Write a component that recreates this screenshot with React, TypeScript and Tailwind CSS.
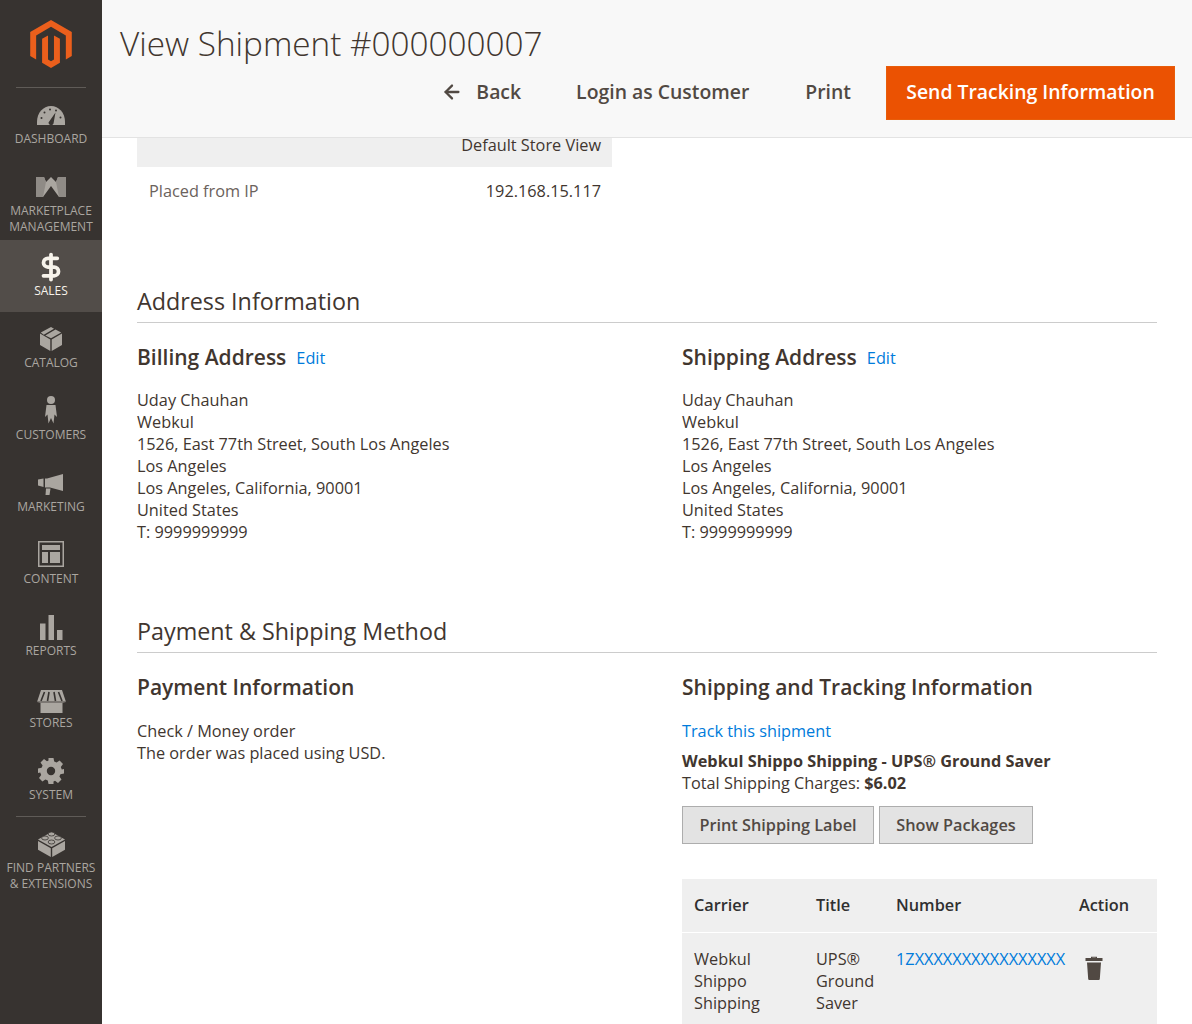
import type { ReactNode } from "react";
import { ArrowLeft, DollarSign } from "lucide-react";

const iconFill = "#aaa6a0";

function DashboardIcon() {
  return (
    <svg width="28" height="19" viewBox="0 0 28 19">
      <path d="M0 19V15.500C0 7 6.200 0 14 0s14 7 14 15.500V19Z" fill={iconFill} />
      <path d="M11.500 16.500 18.500 6.500 16.500 17.500A2.600 2.600 0 0 1 11.500 16.500Z" fill="#373330" />
      <g fill="#373330">
        <circle cx="4.500" cy="12" r="1" />
        <circle cx="7.500" cy="6.500" r="1" />
        <circle cx="13" cy="3.500" r="1" />
        <circle cx="19" cy="4.500" r="1" />
        <circle cx="23.500" cy="11.500" r="1" />
      </g>
    </svg>
  );
}

function MarketplaceIcon() {
  return (
    <svg width="30" height="20" viewBox="0 0 30 20">
      <path d="M0 0H8L10 5 15 0 20 5 22 0H30V20H23L15 9 7 20H0Z" fill={iconFill} />
      <path d="M8 0 10 5 7 20H0V0ZM22 0 20 5 23 20H30V0Z" fill="#8f8b86" />
    </svg>
  );
}

function CatalogIcon() {
  return (
    <svg width="22" height="24" viewBox="0 0 22 24">
      <path d="M0 6.500 10.300 12.500V24L0 18ZM22 6.500V18L11.700 24V12.500Z" fill={iconFill} />
      <path d="M11 0 14 1.700 3.800 7.700 .8 5.500ZM15.500 2.600 21.200 5.500 11 11.300 5.300 8.500Z" fill={iconFill} />
    </svg>
  );
}

function CustomerIcon() {
  return (
    <svg width="14" height="28" viewBox="0 0 14 28" className="-mt-[2px]">
      <circle cx="7" cy="4" r="4" fill={iconFill} />
      <path d="M2.500 9H11.500L13 21 10.500 18.500 9.500 27.500 7 22 4.500 27.500 3.500 18.500 1 21Z" fill={iconFill} />
    </svg>
  );
}

function MarketingIcon() {
  return (
    <svg width="26" height="24" viewBox="0 0 26 24" className="mt-[6px]">
      <path d="M25 0V17L12 13.500H7V4.500H9Z" fill={iconFill} />
      <path d="M0 5.500 5.500 4.500V13L0 11.500ZM8 14.500H12.500L11.500 21 7.500 21Z" fill={iconFill} />
    </svg>
  );
}

function ContentIcon() {
  return (
    <svg width="26" height="26" viewBox="0 0 26 26" className="-mt-[2px]">
      <path fillRule="evenodd" d="M0 0H26V26H0ZM1.500 1.500V24.500H24.500V1.500Z" fill={iconFill} />
      <path d="M4 4H22V9H4ZM4 11H10V22H4ZM12 11H22V22H12Z" fill={iconFill} />
    </svg>
  );
}

function ReportsIcon() {
  return (
    <svg width="23" height="25" viewBox="0 0 23 25">
      <path d="M0 8.500H5.500V25H0ZM8.500 0H14V25H8.500ZM17 15H22.500V25H17Z" fill={iconFill} />
    </svg>
  );
}

function StoresIcon() {
  return (
    <svg width="29" height="23" viewBox="0 0 29 23" className="mt-[5px]">
      <path d="M4 0H25L29 12 25.500 13V23H3.500V13L0 12Z" fill={iconFill} />
      <path d="M7.500 2 4 11M12 2 10.500 11M17 2 18.500 11M21.500 2 25 11" stroke="#373330" strokeWidth="1.600" fill="none" />
      <path d="M0 12H29" stroke="#373330" strokeWidth="0.800" />
    </svg>
  );
}

function SystemIcon() {
  return (
    <svg width="26" height="26" viewBox="0 0 26 26">
      <path
        fillRule="evenodd"
        fill={iconFill}
        d="M10.500 0H15.500L16.200 3.600 18.600 4.600 21.600 2.500 25 6 22.800 9 23.800 11.400 26 11V15.500L22.400 16.200 21.400 18.600 23.500 21.600 20 25 17 22.800 15.500 23.400 15.500 26H10.500L9.800 22.400 7.400 21.400 4.400 23.500 1 20 3.200 17 2.200 14.600 0 15V10.500L3.600 9.800 4.600 7.400 2.500 4.400 6 1 9 3.200 10.500 2.600ZM13 8.800A4.200 4.200 0 1 0 13 17.200 4.200 4.200 0 0 0 13 8.800Z"
      />
    </svg>
  );
}

function PartnersIcon() {
  return (
    <svg width="27" height="26" viewBox="0 0 27 26">
      <path d="M13.500 1 27 8.500 13.500 16 0 8.500Z" fill={iconFill} />
      <path d="M0 10 12.800 17.200V26L0 18.800ZM27 10V18.800L14.200 26V17.200Z" fill={iconFill} />
      <g fill={iconFill} stroke="#373330" strokeWidth="0.800">
        <ellipse cx="13.500" cy="3" rx="3.400" ry="2" />
        <ellipse cx="7" cy="7" rx="3.400" ry="2" />
        <ellipse cx="20" cy="7" rx="3.400" ry="2" />
        <ellipse cx="13.500" cy="11" rx="3.400" ry="2" />
      </g>
    </svg>
  );
}

function NavItem({ icon, label, active, tall }: { icon: ReactNode; label: string[]; active?: boolean; tall?: boolean }) {
  return (
    <div
      className={`flex flex-col items-center pt-[14px] ${tall ? "h-[80px]" : "h-[72px]"} ${
        active ? "bg-[#524d49] text-[#f7f3eb]" : "text-[#aaa6a0]"
      }`}
    >
      <div className="flex h-[26px] items-center justify-center">{icon}</div>
      <div className="mt-[3px] text-center text-[12px] leading-[16px] whitespace-nowrap">
        {label.map((line) => (
          <div key={line}>{line}</div>
        ))}
      </div>
    </div>
  );
}

function Sidebar() {
  return (
    <aside className="w-[102px] shrink-0 bg-[#373330]">
      <div className="flex h-[88px] justify-center pt-[20px]">
        <svg width="48" height="48" viewBox="0 0 24 24">
          <path
            fill="#eb5f1c"
            d="M12 24l-4.455-2.572v-12l2.97-1.715v12.001l1.485.902 1.485-.902V7.713l2.971 1.715v12L12 24zM22.391 6v12l-2.969 1.714V7.713L12 3.430 4.574 7.713v12.001L1.609 18V6L12 0l10.391 6z"
          />
        </svg>
      </div>
      <div className="mx-[16px] -mt-px h-px bg-[#5f5b57]" />
      <NavItem icon={<DashboardIcon />} label={["DASHBOARD"]} />
      <NavItem tall icon={<MarketplaceIcon />} label={["MARKETPLACE", "MANAGEMENT"]} />
      <NavItem
        active
        icon={<DollarSign className="h-[30px] w-[30px] text-[#f7f3eb]" strokeWidth={3} />}
        label={["SALES"]}
      />
      <NavItem icon={<CatalogIcon />} label={["CATALOG"]} />
      <NavItem icon={<CustomerIcon />} label={["CUSTOMERS"]} />
      <NavItem icon={<MarketingIcon />} label={["MARKETING"]} />
      <NavItem icon={<ContentIcon />} label={["CONTENT"]} />
      <NavItem icon={<ReportsIcon />} label={["REPORTS"]} />
      <NavItem icon={<StoresIcon />} label={["STORES"]} />
      <NavItem icon={<SystemIcon />} label={["SYSTEM"]} />
      <div className="mx-[16px] h-px bg-[#5f5b57]" />
      <NavItem tall icon={<PartnersIcon />} label={["FIND PARTNERS", "& EXTENSIONS"]} />
    </aside>
  );
}

function PageHeader() {
  return (
    <header className="h-[138px] border-b border-[#e3e3e3] bg-[#f8f8f8] pr-[17px] pl-[18px]">
      <h1 className="pt-[20px] text-[33.300px] leading-[46px] font-light text-[#41362f]">View Shipment #000000007</h1>
      <div className="flex items-center justify-end text-[19.400px] font-semibold text-[#514943]">
        <ArrowLeft className="mr-[13px] mb-[2px] h-[22px] w-[22px]" strokeWidth={2.500} />
        <span className="mb-[2px]">Back</span>
        <span className="mb-[2px] ml-[55px]">Login as Customer</span>
        <span className="mb-[2px] ml-[56px]">Print</span>
        <button className="ml-[35px] h-[54px] w-[289px] border border-[#e85d0a] bg-[#eb5202] pb-[2px] text-center text-white">
          Send Tracking Information
        </button>
      </div>
    </header>
  );
}

function AddressBlock({ title }: { title: string }) {
  return (
    <div>
      <div className="flex items-baseline">
        <h3 className="text-[21px] leading-[30px] font-semibold text-[#41362f]">{title}</h3>
        <a className="ml-[10px] -translate-y-px text-[#007bdb]">Edit</a>
      </div>
      <address className="mt-[17px] not-italic">
        <div>Uday Chauhan</div>
        <div>Webkul</div>
        <div>1526, East 77th Street, South Los Angeles</div>
        <div>Los Angeles</div>
        <div>Los Angeles, California, 90001</div>
        <div>United States</div>
        <div>T: 9999999999</div>
      </address>
    </div>
  );
}

function SectionTitle({ children }: { children: ReactNode }) {
  return (
    <h2 className="border-b border-[#cccccc] pb-[4px] text-[23.300px] leading-[33px] text-[#41362f]">{children}</h2>
  );
}

function TrashIcon() {
  return (
    <svg width="18" height="24" viewBox="0 0 18 24" className="mt-[23px] ml-[6px]">
      <path fill="#514943" d="M6 2V0.800H12V2H17.500V5H0.500V2ZM7.300 2H10.700V1.800H7.300ZM2 6.500H16L14.800 23C14.700 23.600 14.400 24 13.800 24H4.200C3.600 24 3.300 23.600 3.200 23Z" />
    </svg>
  );
}

export default function App() {
  return (
    <div className="flex h-[1024px] w-[1192px] overflow-hidden bg-white font-['Open_Sans',sans-serif] text-[16.300px] leading-[22px] text-[#41362f]">
      <Sidebar />
      <main className="min-w-0 flex-1">
        <div className="h-[138px]">
          <PageHeader />
        </div>
        <div className="pr-[35px] pl-[35px]">
          <div className="w-[475px]">
            <div className="h-[29px] bg-[#efefef] pr-[11px] text-right leading-[14px]">Default Store View</div>
            <div className="flex justify-between pt-[13px] pr-[11px] pl-[12px]">
              <span className="text-[#6b625c]">Placed from IP</span>
              <span>192.168.15.117</span>
            </div>
          </div>

          <section className="mt-[83px]">
            <SectionTitle>Address Information</SectionTitle>
            <div className="mt-[19px] grid grid-cols-2 gap-x-[70px]">
              <AddressBlock title="Billing Address" />
              <AddressBlock title="Shipping Address" />
            </div>
          </section>

          <section className="mt-[72px]">
            <SectionTitle>Payment &amp; Shipping Method</SectionTitle>
            <div className="mt-[19px] grid grid-cols-2 gap-x-[70px]">
              <div>
                <h3 className="text-[21px] leading-[30px] font-semibold">Payment Information</h3>
                <p className="mt-[18px]">Check / Money order</p>
                <p>The order was placed using USD.</p>
              </div>
              <div>
                <h3 className="text-[21px] leading-[30px] font-semibold">Shipping and Tracking Information</h3>
                <a className="mt-[18px] block text-[#007bdb]">Track this shipment</a>
                <div className="mt-[8px] font-bold">Webkul Shippo Shipping - UPS® Ground Saver</div>
                <div>
                  Total Shipping Charges: <span className="font-bold">$6.02</span>
                </div>
                <div className="mt-[12px] flex gap-[5px]">
                  <button className="h-[38px] w-[192px] border border-[#adadad] bg-[#e3e3e3] font-semibold text-[#514943]">
                    Print Shipping Label
                  </button>
                  <button className="h-[38px] w-[154px] border border-[#adadad] bg-[#e3e3e3] font-semibold text-[#514943]">
                    Show Packages
                  </button>
                </div>
                <table className="mt-[35px] w-[475px] table-fixed bg-[#efefef] text-left">
                  <colgroup>
                    <col className="w-[122px]" />
                    <col className="w-[80px]" />
                    <col className="w-[183px]" />
                    <col className="w-[90px]" />
                  </colgroup>
                  <thead>
                    <tr className="h-[53px] border-b border-white">
                      <th className="pl-[12px] font-semibold text-[#303030]">Carrier</th>
                      <th className="pl-[12px] font-semibold text-[#303030]">Title</th>
                      <th className="pl-[12px] font-semibold text-[#303030]">Number</th>
                      <th className="pl-[12px] font-semibold text-[#303030]">Action</th>
                    </tr>
                  </thead>
                  <tbody>
                    <tr className="align-top">
                      <td className="pt-[15px] pb-[20px] pl-[12px]">
                        Webkul
                        <br />
                        Shippo
                        <br />
                        Shipping
                      </td>
                      <td className="pt-[15px] pl-[12px]">
                        UPS®
                        <br />
                        Ground
                        <br />
                        Saver
                      </td>
                      <td className="pt-[15px] pl-[12px] text-[#007bdb]">1ZXXXXXXXXXXXXXXXX</td>
                      <td className="pl-[12px]">
                        <TrashIcon />
                      </td>
                    </tr>
                  </tbody>
                </table>
              </div>
            </div>
          </section>
        </div>
      </main>
    </div>
  );
}
